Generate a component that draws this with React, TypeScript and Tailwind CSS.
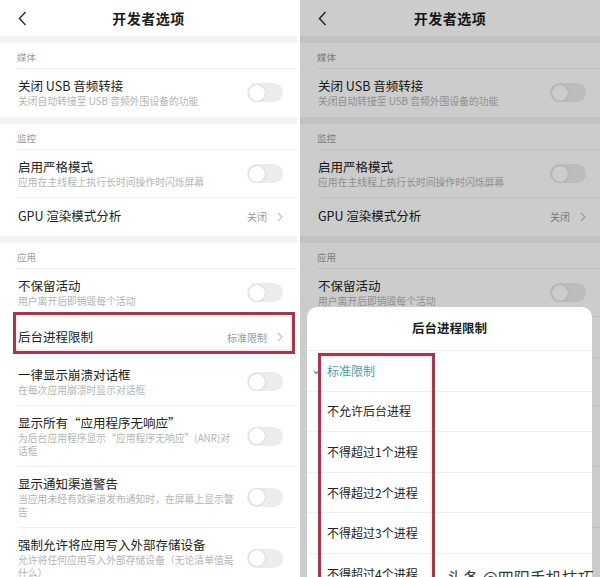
import React from 'react';

type Sub = string[];

const Toggle = () => (
  <div className="w-[36px] h-[19px] rounded-full bg-[#ececec] px-[1.5px] flex items-center shrink-0">
    <div className="w-[16px] h-[16px] rounded-full bg-white shadow-[0_0_1.5px_rgba(0,0,0,0.25)]" />
  </div>
);

const Chevron = () => (
  <svg width="6" height="10" viewBox="0 0 6 10" className="shrink-0">
    <path d="M1 1 L5 5 L1 9" fill="none" stroke="#c2c2c2" strokeWidth="1.2" />
  </svg>
);

const Header = () => (
  <div className="h-[36px] relative flex items-center justify-center">
    <svg width="9" height="15" viewBox="0 0 9 15" className="absolute left-[18px] top-[11px]">
      <path d="M7.5 1 L1.5 7.5 L7.5 14" fill="none" stroke="#333" strokeWidth="1.5" />
    </svg>
    <span className="text-[14px] font-semibold text-[#1c1c1c] tracking-[0.5px]">开发者选项</span>
  </div>
);

const Band = () => <div className="h-[7px] bg-[#f3f3f3]" />;

const Label = ({ text }: { text: string }) => (
  <div className="h-[26px] ml-[17px] border-b border-[#efefef] flex items-center pt-[3px] text-[9.5px] text-[#9c9c9c]">
    {text}
  </div>
);

const ToggleItem = ({ title, sub, line = true }: { title: string; sub: Sub; line?: boolean }) => (
  <div
    className={
      'ml-[18px] pr-[14px] pt-[8px] pb-[8px] flex items-center justify-between ' +
      (line ? 'border-b border-[#efefef]' : 'border-b border-transparent')
    }
  >
    <div className="w-[224px]">
      <div className="text-[12.5px] leading-[18px] text-[#222]">{title}</div>
      {sub.map((s, i) => (
        <div key={i} className="text-[9.8px] leading-[13px] text-[#b4b4b4] whitespace-nowrap">
          {s}
        </div>
      ))}
    </div>
    <Toggle />
  </div>
);

const ValueItem = ({
  title,
  value,
  height,
  line = true,
  highlight = false,
}: {
  title: string;
  value: string;
  height: string;
  line?: boolean;
  highlight?: boolean;
}) => (
  <div className={'relative ' + height}>
    <div
      className={
        'ml-[18px] pr-[14px] h-full flex items-center justify-between ' +
        (line ? 'border-b border-[#efefef]' : 'border-b border-transparent')
      }
    >
      <span className="text-[12.5px] text-[#222]">{title}</span>
      <div className="flex items-center gap-[10px]">
        <span className="text-[10px] text-[#9a9a9a]">{value}</span>
        <Chevron />
      </div>
    </div>
    {highlight && (
      <div className="absolute left-[13px] right-[2px] top-[-5px] bottom-[4px] border-[3px] border-[#a3384b] shadow-[inset_0_0_3px_rgba(210,90,110,0.35)]" />
    )}
  </div>
);

const SettingsList = ({ highlight = false }: { highlight?: boolean }) => (
  <>
    <Header />
    <Band />
    <Label text="媒体" />
    <ToggleItem title="关闭 USB 音频转接" sub={['关闭自动转接至 USB 音频外围设备的功能']} line={false} />
    <Band />
    <Label text="监控" />
    <ToggleItem title="启用严格模式" sub={['应用在主线程上执行长时间操作时闪烁屏幕']} />
    <ValueItem title="GPU 渲染模式分析" value="关闭" height="h-[38px]" line={false} />
    <div className="h-[7px] bg-[#f3f3f3]" />
    <Label text="应用" />
    <ToggleItem title="不保留活动" sub={['用户离开后即销毁每个活动']} />
    <ValueItem title="后台进程限制" value="标准限制" height="h-[41px]" highlight={highlight} />
    <ToggleItem title="一律显示崩溃对话框" sub={['在每次应用崩溃时显示对话框']} />
    <ToggleItem title="显示所有“应用程序无响应”" sub={['为后台应用程序显示“应用程序无响应”(ANR)对', '话框']} />
    <ToggleItem title="显示通知渠道警告" sub={['当应用未经有效渠道发布通知时，在屏幕上显示警', '告']} />
    <ToggleItem title="强制允许将应用写入外部存储设备" sub={['允许将任何应用写入外部存储设备（无论清单值是', '什么）']} />
  </>
);

const OPTIONS = ['标准限制', '不允许后台进程', '不得超过1个进程', '不得超过2个进程', '不得超过3个进程', '不得超过4个进程'];

const Sheet = () => (
  <div className="absolute left-[7px] right-[8px] top-[307px] bottom-[-40px] bg-white rounded-t-[10px]">
    <div className="h-[43px] flex items-center justify-center text-[12.5px] font-semibold text-[#1c1c1c]">
      后台进程限制
    </div>
    {OPTIONS.map((o, i) => (
      <div key={o} className="h-[40.6px] border-t border-[#efefef] flex items-center pl-[6px]">
        {i === 0 ? (
          <svg width="9" height="8" viewBox="0 0 9 8" className="mr-[5px]">
            <path d="M1 4 L3.5 6.5 L8 1" fill="none" stroke="#4a9db2" strokeWidth="1.3" />
          </svg>
        ) : (
          <span className="w-[14px]" />
        )}
        <span className={'text-[12px] ' + (i === 0 ? 'text-[#4a9db2]' : 'text-[#222]')}>{o}</span>
      </div>
    ))}
    <div className="absolute left-[11px] w-[117px] top-[46px] bottom-0 border-[3px] border-[#a3384b] shadow-[inset_0_0_3px_rgba(210,90,110,0.35)]" />
  </div>
);

export default function App() {
  return (
    <div className="w-[600px] h-[577px] overflow-hidden bg-white flex gap-[3px] font-['Noto_Sans_CJK_SC','Noto_Sans',sans-serif]">
      <div className="w-[297px] shrink-0 bg-white">
        <SettingsList highlight />
      </div>
      <div className="w-[300px] shrink-0 relative overflow-hidden bg-white">
        <SettingsList />
        <div className="absolute inset-0 bg-black/20" />
        <Sheet />
        <div className="absolute left-[147px] top-[565px] text-[16px] text-[#3a3a3a] whitespace-nowrap">头条 @四阳手机技巧</div>
      </div>
    </div>
  );
}
